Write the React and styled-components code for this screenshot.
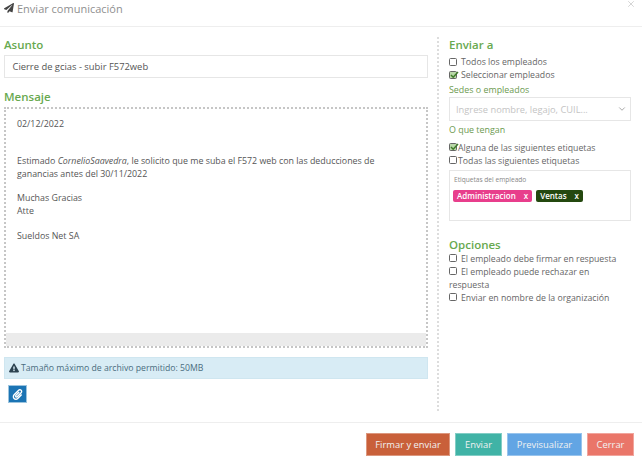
import React from "react";
import styled, { createGlobalStyle } from "styled-components";
import { FaPaperPlane, FaExclamationTriangle, FaPaperclip } from "react-icons/fa";
import { FiChevronDown, FiX } from "react-icons/fi";

const Global = createGlobalStyle`
  html, body { margin: 0; padding: 0; background: #fff; }
  body { font-family: "Open Sans", "Liberation Sans", sans-serif; color: #666; overflow: hidden; }
  * { box-sizing: border-box; }
`;
const Modal = styled.div`width: 642px; height: 459px; display: flex; flex-direction: column; position: relative;`;
const Header = styled.header`
  height: 27px; flex: none; border-bottom: 1px solid #eee; padding: 1px 0 0 4px;
  display: flex; align-items: flex-start; gap: 3px; font-size: 11px; line-height: 16px; color: #8f8f8f;
  svg { color: #444; margin-top: 2px; flex: none; }
`;
const Close = styled.span`position: absolute; top: -1px; right: 6px; color: #ccc; display: flex;`;
const Body = styled.div`height: 395px; flex: none; display: flex; padding: 10px 0 0 4px;`;
const Left = styled.div`width: 424px; flex: none; display: flex; flex-direction: column;`;
const Right = styled.div`
  width: 195px; height: 374px; margin-left: 9px; padding: 0 0 0 10px; border-left: 2px dotted #ddd;
  display: flex; flex-direction: column;
`;
const Section = styled.h4`margin: 0; font-size: 11.5px; line-height: 15px; font-weight: 600; color: #68a94f;`;
const Subject = styled.div`
  height: 23px; margin-top: 3px; border: 1px solid #e6e6e6; padding: 0 7.5px; font-size: 9.4px; line-height: 21px; color: #555;
`;
const MessageLabel = styled(Section)`margin-top: 11px;`;
const Editor = styled.div`
  height: 241px; margin-top: 3px; border: 2px dotted #c6c6c6; display: flex; flex-direction: column;
`;
const EditorText = styled.div`flex: 1; padding: 9px 11px; font-size: 8.85px; line-height: 12.4px; color: #555; i { font-style: italic; }`;
const Para = styled.p`margin: 0 0 12.4px; min-height: 12.4px; &:empty { margin: 0; }`;
const Resize = styled.div`height: 13px; background: #ebebeb;`;
const Alert = styled.div`
  height: 22px; margin-top: 9px; background: #d8ecf5; border: 1px solid #cfe6f0; padding-left: 4px;
  display: flex; align-items: center; gap: 2px; font-size: 8.7px; color: #4a6d80; svg { color: #2c4250; }
`;
const Attach = styled.button`
  width: 19px; height: 18px; margin: 6px 0 0 4px; padding: 0; background: #1b74b4; border: 1px solid #9cc4de;
  display: flex; align-items: center; justify-content: center; color: #fff;
`;
const Check = styled.label`display: block; font-size: 8.72px; line-height: 13px; color: #666;`;
const Box = styled.span`
  display: inline-block; width: 8px; height: 8px; border: 1px solid #666; border-radius: 1.5px; vertical-align: -0.5px;
  margin-right: ${p => p.$tight ? "1px" : "4px"}; position: relative; background: ${p => p.$on ? "#b9d8a8" : "#fff"};
  svg { position: absolute; left: -1px; top: -2px; }
`;
const Checks = styled.div`margin-top: ${p => p.$mt}px; max-width: 176px; display: flex; flex-direction: column;`;
const Green = styled.div`font-size: 8.9px; line-height: 12px; color: #6c9a4f; margin-top: ${p => p.$mt}px;`;
const Select = styled.div`
  height: 24px; margin-top: 1px; width: 182px; border: 1px solid #e6e6e6; padding: 0 3px 0 6px;
  display: flex; align-items: center; justify-content: space-between; font-size: 9.3px; color: #c4c4c4; svg { color: #999; }
`;
const Tags = styled.div`
  width: 182px; height: 51px; margin-top: 2.5px; border: 1px solid #e6e6e6; padding: 4px 3px;
`;
const TagsLabel = styled.div`font-size: 6.6px; line-height: 10px; color: #888; margin-left: 1px;`;
const TagRow = styled.div`display: flex; gap: 4px; margin-top: 5px;`;
const Tag = styled.span`
  height: 12px; padding: 0 4px; border-radius: 2px; background: ${p => p.$bg}; color: #fff; font-size: 8px; line-height: 12px; font-weight: 600;
  display: flex; gap: 8px;
`;
const OptionsTitle = styled(Section)`margin-top: 15.5px;`;
const Footer = styled.footer`
  flex: 1; border-top: 1px solid #eee; display: flex; justify-content: flex-end; gap: 5px; padding: 10px 8px 0 0;
`;
const Btn = styled.button`
  width: ${p => p.$w}px; height: 23px; padding: 0; border: 1px solid rgba(255,255,255,.35); background: ${p => p.$bg}; color: #f1f1f1;
  font: 9.4px "Open Sans", sans-serif;
`;
const Tick = () => (
  <svg width="10" height="10" viewBox="0 0 10 10"><path d="M2 5l2.2 2.2L9 2" fill="none" stroke="#3f7a2a" strokeWidth="1.5" /></svg>
);

export default function App() {
  return (
    <Modal>
      <Global />
      <Header><FaPaperPlane size={10} />Enviar comunicación</Header>
      <Close><FiX size={10} /></Close>
      <Body>
        <Left>
          <Section>Asunto</Section>
          <Subject>Cierre de gcias - subir F572web</Subject>
          <MessageLabel>Mensaje</MessageLabel>
          <Editor>
            <EditorText>
              <Para>02/12/2022</Para>
              <Para />
              <Para>Estimado <i>CornelioSaavedra</i>, le solicito que me suba el F572 web con las deducciones de ganancias antes del 30/11/2022</Para>
              <Para>Muchas Gracias<br />Atte</Para>
              <Para>Sueldos Net SA</Para>
            </EditorText>
            <Resize />
          </Editor>
          <Alert><FaExclamationTriangle size={10} />Tamaño máximo de archivo permitido: 50MB</Alert>
          <Attach aria-label="Adjuntar"><FaPaperclip size={11} /></Attach>
        </Left>
        <Right>
          <Section>Enviar a</Section>
          <Checks $mt={4}>
            <Check><Box />Todos los empleados</Check>
            <Check><Box $on><Tick /></Box>Seleccionar empleados</Check>
          </Checks>
          <Green $mt={2}>Sedes o empleados</Green>
          <Select>Ingrese nombre, legajo, CUIL...<FiChevronDown size={10} /></Select>
          <Green $mt={3}>O que tengan</Green>
          <Checks $mt={5.5}>
            <Check><Box $on $tight><Tick /></Box>Alguna de las siguientes etiquetas</Check>
            <Check><Box $tight />Todas las siguientes etiquetas</Check>
          </Checks>
          <Tags>
            <TagsLabel>Etiquetas del empleado</TagsLabel>
            <TagRow>
              <Tag $bg="#e83e8c"><span>Administracion</span><span>x</span></Tag>
              <Tag $bg="#24480f"><span>Ventas</span><span>x</span></Tag>
            </TagRow>
          </Tags>
          <OptionsTitle>Opciones</OptionsTitle>
          <Checks $mt={1}>
            <Check><Box />El empleado debe firmar en respuesta</Check>
            <Check><Box />El empleado puede rechazar en respuesta</Check>
            <Check><Box />Enviar en nombre de la organización</Check>
          </Checks>
        </Right>
      </Body>
      <Footer>
        <Btn $w={84} $bg="#c9603a">Firmar y enviar</Btn>
        <Btn $w={47} $bg="#40b3a6">Enviar</Btn>
        <Btn $w={75} $bg="#62a5e4">Previsualizar</Btn>
        <Btn $w={47} $bg="#ea7669">Cerrar</Btn>
      </Footer>
    </Modal>
  );
}
